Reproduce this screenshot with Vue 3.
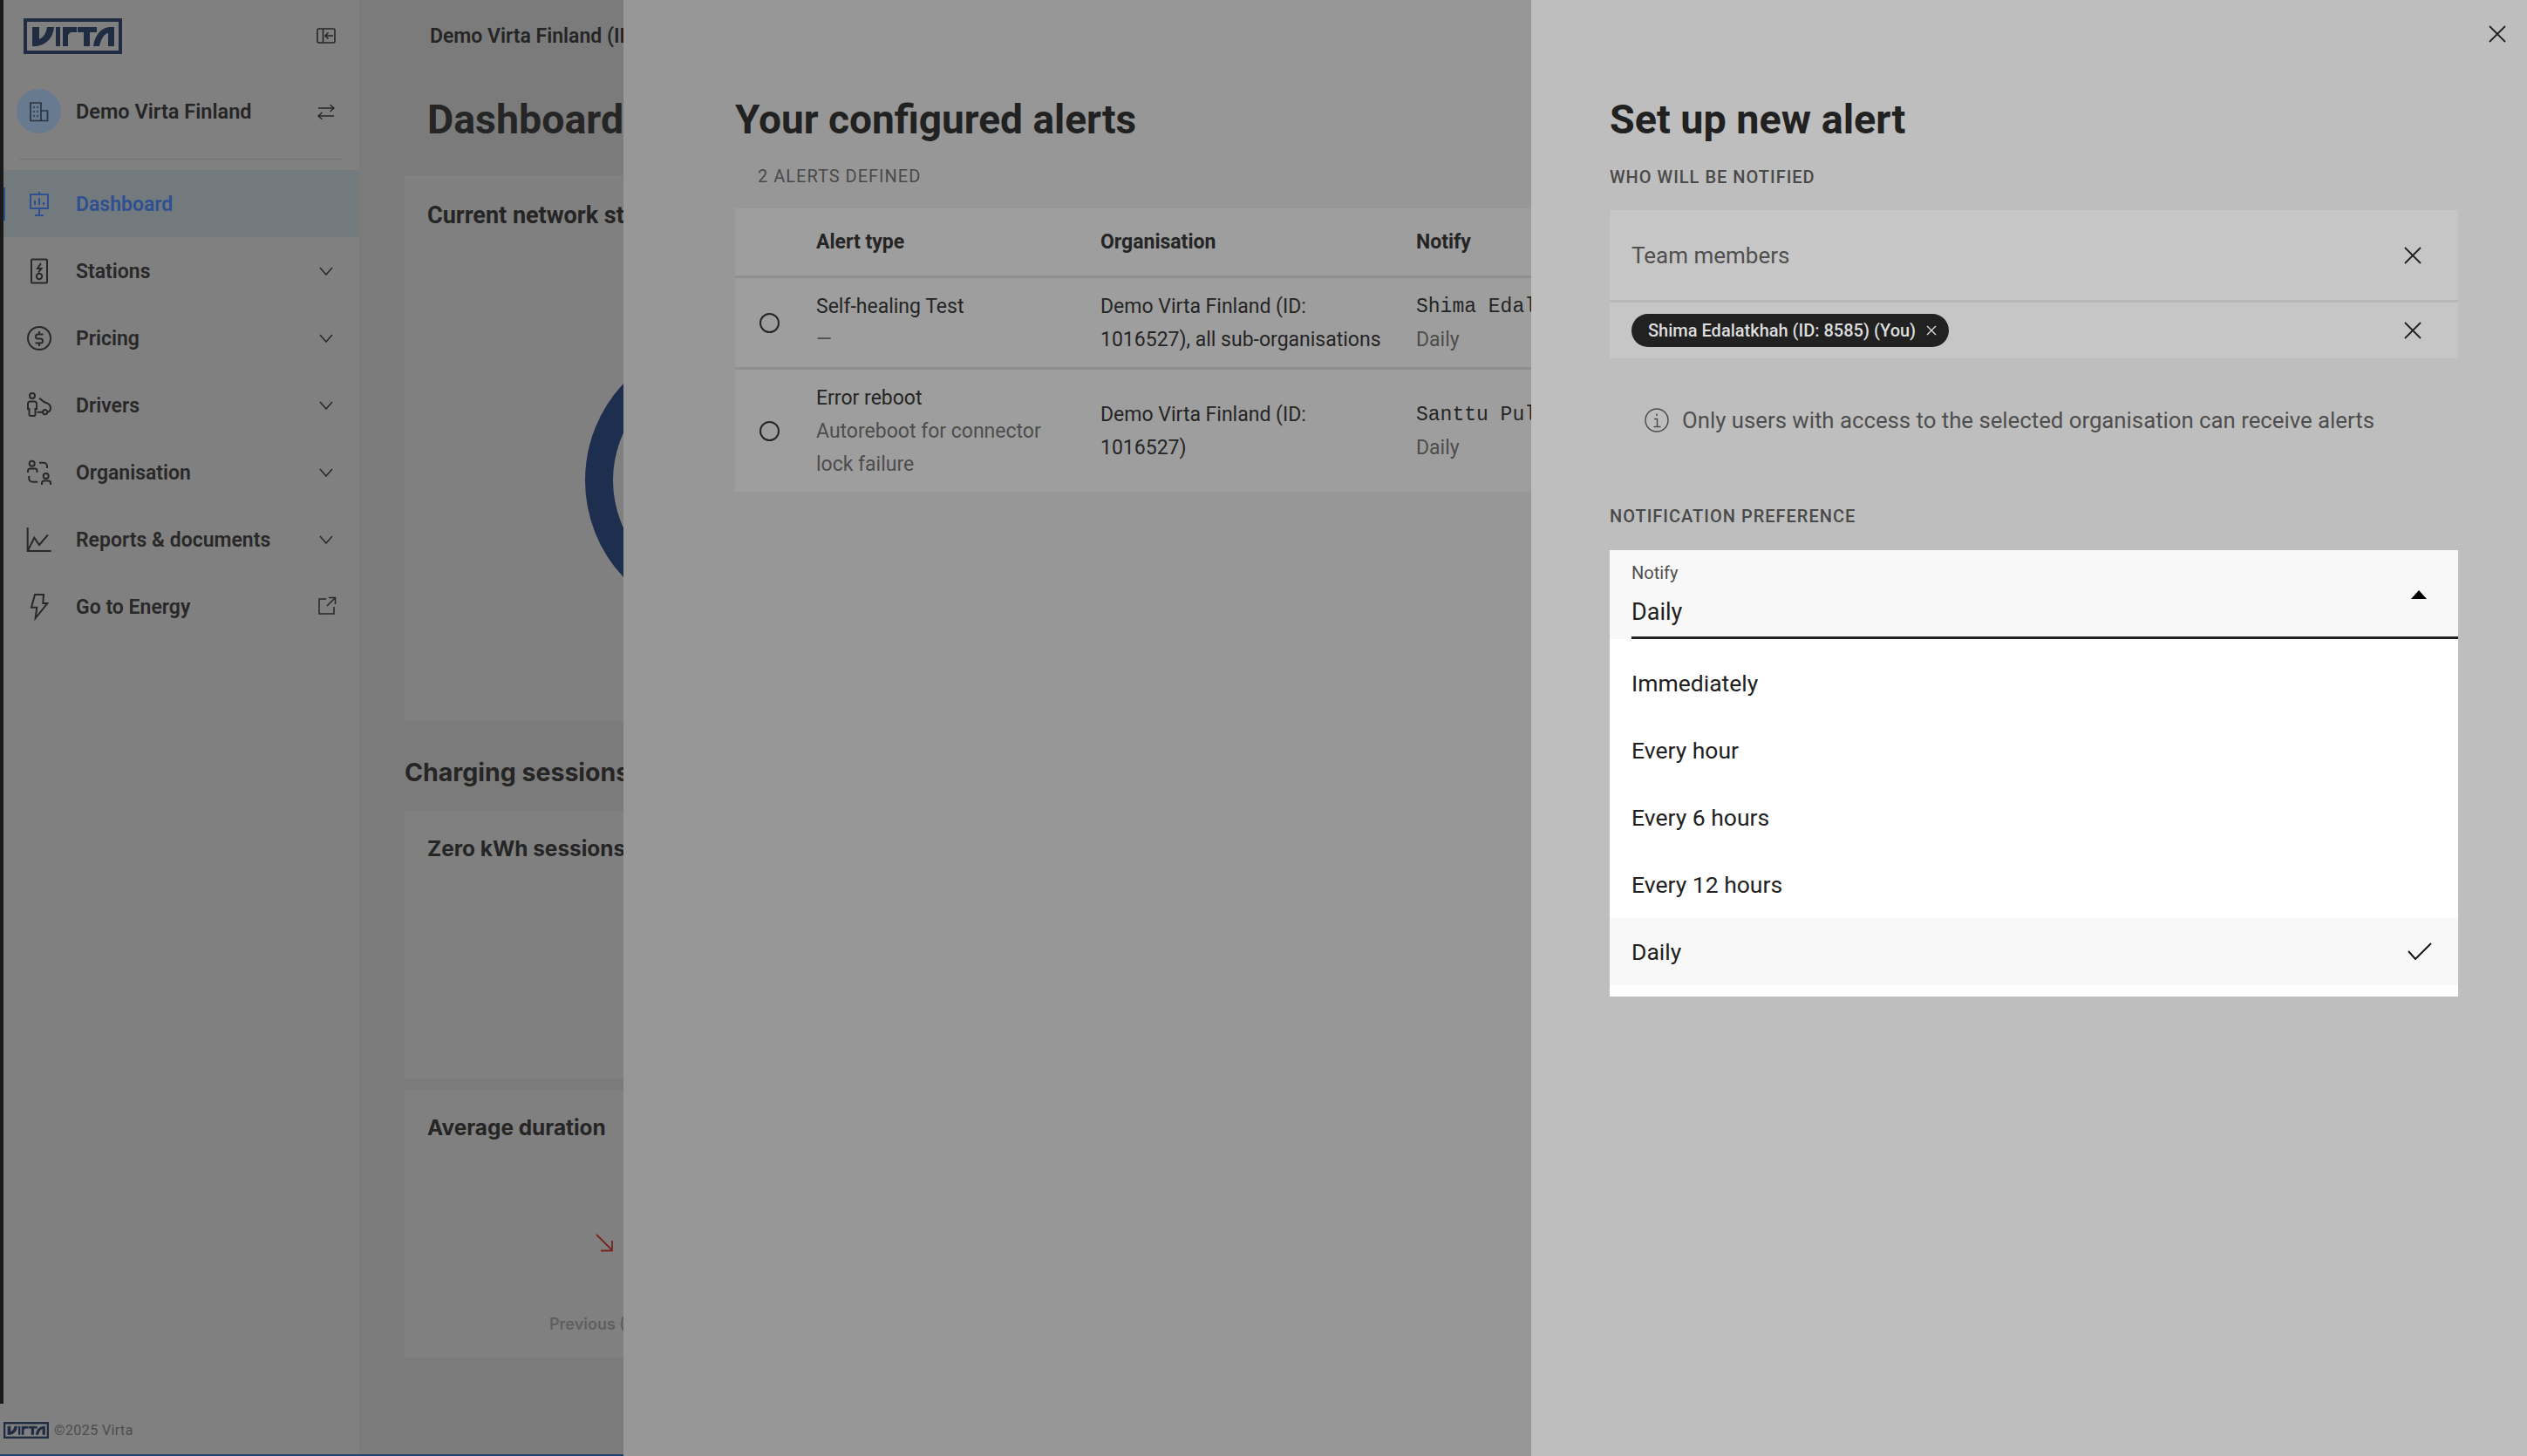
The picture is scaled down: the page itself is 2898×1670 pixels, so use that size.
<script setup>
// Alert set-up drawers on top of the dimmed dashboard
const navItems = [
  { label: 'Dashboard', active: true, paths: ['M6 5h20v16H6z', 'M16 2v3M16 21v8M11 29h10M11 17v-5M16 17V9M21 17v-3'] },
  { label: 'Stations', chevron: true, paths: ['M8 2.5h16a1 1 0 0 1 1 1v25a1 1 0 0 1-1 1H8a1 1 0 0 1-1-1v-25a1 1 0 0 1 1-1z', 'M18 7l-4 6h4.5L15 17.5', 'M19.2 22a3.2 3.2 0 1 1-6.4 0 3.2 3.2 0 0 1 6.4 0z'] },
  { label: 'Pricing', chevron: true, paths: ['M29 16a13 13 0 1 1-26 0 13 13 0 0 1 26 0z', 'M20.5 11.5h-6a2.5 2.5 0 0 0 0 5h3a2.5 2.5 0 0 1 0 5h-6', 'M16 8v3.5M16 21.5V25'] },
  { label: 'Drivers', chevron: true, paths: ['M11 5a3 3 0 1 1-6 0 3 3 0 0 1 6 0z', 'M5.5 11.5h5a2.5 2.5 0 0 1 2.5 2.5v6h-1.5v6.5a1.5 1.5 0 0 1-1.5 1.5H6a1.5 1.5 0 0 1-1.5-1.5V20H3v-6a2.500 2.500 0 0 1 2.500-2.500z', 'M16 8c3 1 4 4 8 5 3 1 5 3 5 6 0 3-2 4.500-3.500 4.700', 'M25.300 23.700a2.600 2.600 0 1 1-5.200 0 2.600 2.600 0 0 1 5.200 0zM13.500 23.700H20'] },
  { label: 'Organisation', chevron: true, paths: ['M10.700 5.700a3 3 0 1 1-6 0 3 3 0 0 1 6 0z', 'M3 16v-2a2.500 2.500 0 0 1 2.500-2.500h5.500a2.500 2.500 0 0 1 2.500 2.500v2', 'M16 4.700h5a4 4 0 0 1 4 4V11', 'M4.300 20v2.700a4 4 0 0 0 4 4h6', 'M26.700 20a3 3 0 1 1-6 0 3 3 0 0 1 6 0z', 'M19 30v-2a2.500 2.500 0 0 1 2.500-2.500h5a2.500 2.500 0 0 1 2.500 2.500v2'] },
  { label: 'Reports & documents', chevron: true, paths: ['M2.700 2v27h27', 'M2.700 29l7.600-15.300L16 22l10-11.700'] },
  { label: 'Go to Energy', external: true, paths: ['M11 2h10l-.7 10h5L11.700 29l1.600-12.300H7z'] },
]

const alerts = [
  { type: 'Self-healing Test', detail: ['—'], org: 'Demo Virta Finland (ID: 1016527), all sub-organisations', person: 'Shima Edalatkhah', freq: 'Daily' },
  { type: 'Error reboot', detail: ['Autoreboot for connector', 'lock failure'], org: 'Demo Virta Finland (ID: 1016527)', person: 'Santtu Pulkkinen', freq: 'Daily' },
]

const options = ['Immediately', 'Every hour', 'Every 6 hours', 'Every 12 hours', 'Daily']
const selected = 'Daily'

const logoShapes = 'M10 10h8v14c6-3 8-8 9-14h8c-1 12-8 20-20 22H10zM37 10h5v22h-5zM45 32V10h16v6h-5c-3 0-5 2-5 5v11zM62 10h22v6h-8v16h-7V16h-7zM80 32c2-14 10-22 20-22h4v22h-7V17c-5 1-8 7-10 15z'
</script>

<template>
  <div class="page">
    <!-- dimmed app behind the drawers -->
    <div class="backdrop">
      <div class="strip"></div>
      <aside class="sidebar">
        <div class="side-head">
          <svg class="logo" viewBox="0 0 113 41">
            <rect x="2" y="2" width="109" height="37" fill="none" stroke="#1f2c42" stroke-width="4" />
            <path :d="logoShapes" fill="#1f2c42" />
          </svg>
          <svg class="tool" width="22" height="18" viewBox="0 0 22 18" fill="none" stroke="#262626" stroke-width="1.600">
            <rect x="1" y="1" width="20" height="16" rx="1.500" />
            <path d="M7.500 1v16M19 9h-9M13.500 5.500L10 9l3.500 3.500" />
          </svg>
        </div>
        <div class="org-row">
          <div class="avatar">
            <svg width="24" height="24" viewBox="0 0 24 24" fill="none" stroke="#2a3442" stroke-width="1.700">
              <path d="M2 22.500V2h12v20.500zM14 11h7.500v11.500H14" />
              <path d="M6 6v2M10 6v2M6 11v2M10 11v2M6 16v2M10 16v2" stroke-width="1.500" />
            </svg>
          </div>
          <span class="org-name">Demo Virta Finland</span>
          <svg width="20" height="18" viewBox="0 0 20 18" fill="none" stroke="#262626" stroke-width="1.500">
            <path d="M1 5h18M14.500 1l4.500 4-4.500 4M19 14H1M5.500 10L1 14l4.500 4" />
          </svg>
        </div>
        <div class="side-rule"></div>
        <nav class="nav">
          <a v-for="item in navItems" :key="item.label" class="nav-item" :class="{ active: item.active }">
            <svg class="nav-icon" viewBox="0 0 32 32" width="32" height="32" fill="none" stroke="currentColor" stroke-width="2">
              <path v-for="d in item.paths" :key="d" :d="d" />
            </svg>
            <span class="nav-label">{{ item.label }}</span>
            <svg v-if="item.chevron" class="chevron" width="16" height="10" viewBox="0 0 16 10" fill="none" stroke="#262626" stroke-width="1.500">
              <path d="M1 1l7 8 7-8" />
            </svg>
            <svg v-if="item.external" class="external" width="22" height="22" viewBox="0 0 22 22" fill="none" stroke="#262626" stroke-width="1.500">
              <path d="M10 3H2v17h17v-8M13 1.500h7.500V9M20.500 1.500L11 11" />
            </svg>
          </a>
        </nav>
        <footer class="side-foot">
          <svg class="foot-logo" viewBox="0 0 113 41">
            <rect x="2.500" y="2.500" width="108" height="36" fill="none" stroke="#1f2c42" stroke-width="5" />
            <path :d="logoShapes" fill="#1f2c42" />
          </svg>
          <span>©2025 Virta</span>
        </footer>
      </aside>

      <main class="main">
        <div class="main-inner">
          <div class="crumb">Demo Virta Finland (ID: 1016527)</div>
          <h1 class="main-title">Dashboard</h1>
          <section class="card card-network">
            <h3 class="card-head">Current network status</h3>
            <div class="donut"></div>
          </section>
          <h2 class="section-head">Charging sessions</h2>
          <section class="card card-small">
            <h3 class="card-title">Zero kWh sessions</h3>
          </section>
          <section class="card card-small gap">
            <h3 class="card-title">Average duration</h3>
            <svg class="trend" width="20" height="21" viewBox="0 0 20 21" fill="none" stroke="#7a2620" stroke-width="1.800">
              <path d="M1 1l18 18M19 8v11.500H6" />
            </svg>
            <div class="previous">Previous (30 days)</div>
          </section>
        </div>
      </main>
    </div>

    <!-- list drawer -->
    <section class="drawer-list">
      <h2 class="drawer-title">Your configured alerts</h2>
      <div class="count">2 ALERTS DEFINED</div>
      <table class="alerts">
        <thead>
          <tr>
            <th class="col-radio"></th>
            <th class="col-type">Alert type</th>
            <th class="col-org">Organisation</th>
            <th class="col-notify">Notify</th>
          </tr>
        </thead>
        <tbody>
          <tr v-for="a in alerts" :key="a.type">
            <td><span class="radio"></span></td>
            <td>
              <div>{{ a.type }}</div>
              <div v-for="d in a.detail" :key="d" class="muted">{{ d }}</div>
            </td>
            <td>{{ a.org }}</td>
            <td>
              <div class="mono">{{ a.person }}</div>
              <div class="muted">{{ a.freq }}</div>
            </td>
          </tr>
        </tbody>
      </table>
    </section>

    <!-- form drawer -->
    <section class="drawer-form">
      <button class="close">
        <svg width="20" height="20" viewBox="0 0 20 20" fill="none" stroke="#212121" stroke-width="1.800"><path d="M1 1l18 18M19 1L1 19" /></svg>
      </button>
      <h2 class="drawer-title form-title">Set up new alert</h2>
      <div class="eyebrow who">WHO WILL BE NOTIFIED</div>
      <div class="field-team">
        <span>Team members</span>
        <svg width="20" height="20" viewBox="0 0 20 20" fill="none" stroke="#212121" stroke-width="1.800"><path d="M1 1l18 18M19 1L1 19" /></svg>
      </div>
      <div class="field-chips">
        <span class="chip">
          Shima Edalatkhah (ID: 8585) (You)
          <svg width="12" height="12" viewBox="0 0 12 12" fill="none" stroke="#dedede" stroke-width="1.300"><path d="M1 1l10 10M11 1L1 11" /></svg>
        </span>
        <svg width="20" height="20" viewBox="0 0 20 20" fill="none" stroke="#212121" stroke-width="1.800"><path d="M1 1l18 18M19 1L1 19" /></svg>
      </div>
      <div class="info">
        <svg width="28" height="28" viewBox="0 0 28 28" fill="none" stroke="#4e4e4e" stroke-width="1.500">
          <circle cx="14" cy="14" r="13" />
          <path d="M14 6.500v2.500M11 12.500h3.500v9M10.500 21.500h8" />
        </svg>
        <span>Only users with access to the selected organisation can receive alerts</span>
      </div>
      <div class="eyebrow pref">NOTIFICATION PREFERENCE</div>
      <div class="select">
        <div class="select-inner">
          <div class="select-text">
            <div class="select-label">Notify</div>
            <div class="select-value">{{ selected }}</div>
          </div>
          <span class="caret"></span>
        </div>
      </div>
      <ul class="menu">
        <li v-for="o in options" :key="o" :class="{ picked: o === selected }">
          <span>{{ o }}</span>
          <svg v-if="o === selected" width="28" height="20" viewBox="0 0 28 20" fill="none" stroke="#161616" stroke-width="2"><path d="M1 10l8 9L27 1" /></svg>
        </li>
      </ul>
    </section>
  </div>
</template>

<style>
html, body { margin: 0; background: #bebebe; }
</style>

<style scoped>
.page {
  display: flex;
  width: 2898px;
  height: 1670px;
  overflow: hidden;
  font-family: Roboto, "Noto Sans", Arial, sans-serif;
  color: #252525;
}
h1, h2, h3 { margin: 0; }

.backdrop {
  flex: none;
  display: flex;
  width: 715px;
  height: 1670px;
  box-sizing: border-box;
  border-bottom: 2px solid #1f4272;
  overflow: hidden;
  background: #808080;
}
.strip { flex: none; width: 4px; height: 1610px; background: #1a1a1a; }

.sidebar {
  flex: none;
  width: 408px;
  display: flex;
  flex-direction: column;
  background: #808080;
}
.side-head {
  height: 82px;
  display: flex;
  align-items: center;
  justify-content: space-between;
  padding: 0 27px 0 23px;
}
.logo { width: 113px; height: 41px; display: block; }
.org-row {
  height: 91px;
  display: flex;
  align-items: center;
  padding: 0 28px 0 15px;
  font-size: 23.500px;
  font-weight: 600;
}
.avatar {
  width: 51px;
  height: 51px;
  border-radius: 50%;
  background: #677a90;
  display: flex;
  align-items: center;
  justify-content: center;
  margin-right: 17px;
}
.org-name { flex: 1; }
.side-rule { height: 1px; background: #737373; margin: 9px 20px 0 18px; }
.nav { margin-top: 12px; display: flex; flex-direction: column; }
.nav-item {
  position: relative;
  height: 77px;
  display: flex;
  align-items: center;
  padding-left: 25px;
  font-size: 23px;
  font-weight: 600;
  color: #282828;
}
.nav-item.active { background: #737a7e; color: #2e5090; }
.nav-item.active::before {
  content: "";
  position: absolute;
  left: 0;
  top: 20px;
  width: 2px;
  height: 38px;
  background: #2e5090;
}
.nav-icon { flex: none; margin-right: 26px; }
.nav-label { flex: 1; padding-top: 2px; }
.chevron { margin-right: 30px; }
.external { margin-right: 26px; margin-top: -2px; }
.side-foot {
  margin-top: auto;
  height: 37px;
  display: flex;
  align-items: flex-start;
  gap: 6px;
  font-size: 16px;
  color: #4c4c4c;
  letter-spacing: 0.4px;
}
.foot-logo { width: 52px; height: 19px; display: block; }
.side-foot span { line-height: 19px; }

.main { flex: 1; min-width: 0; background: #7b7b7b; overflow: hidden; }
.main-inner { width: 1100px; padding-left: 52px; white-space: nowrap; }
.crumb { height: 82px; line-height: 84px; padding-left: 29px; font-size: 23px; font-weight: 600; }
.main-title { margin-top: 25px; height: 60px; line-height: 60px; padding-left: 26px; font-size: 46.500px; font-weight: 700; }
.card { background: #808080; padding: 26px; box-sizing: border-box; }
.card-network { margin-top: 34px; height: 626px; }
.card-head { font-size: 27px; font-weight: 700; line-height: 40px; height: 38px; }
.donut {
  width: 324px;
  height: 324px;
  box-sizing: border-box;
  margin: 124px 0 0 181px;
  border: 32px solid #1e2e4e;
  border-radius: 50%;
}
.section-head {
  margin-top: 38px;
  height: 40px;
  line-height: 42px;
  font-family: Inter, Roboto, sans-serif;
  font-size: 28.500px;
  font-weight: 700;
}
.card-small { margin-top: 25px; height: 307px; }
.card-small.gap { margin-top: 13px; }
.card-title { font-family: Inter, Roboto, sans-serif; font-size: 24.400px; font-weight: 700; line-height: 34px; height: 32px; }
.trend { display: block; margin: 107px 0 0 193px; }
.previous {
  margin: 70px 0 0 140px;
  line-height: 26px;
  font-family: Inter, Roboto, sans-serif;
  font-size: 18px;
  font-weight: 600;
  color: #5f5f5f;
}

.drawer-list {
  flex: none;
  width: 1041px;
  box-sizing: border-box;
  padding: 107px 0 0 128px;
  background: #979797;
  overflow: hidden;
}
.drawer-title { height: 60px; line-height: 60px; font-size: 46px; font-weight: 700; color: #212121; white-space: nowrap; }
.form-title { font-size: 46.700px; }
.count {
  margin-top: 23px;
  padding-left: 26px;
  line-height: 24px;
  font-size: 20px;
  letter-spacing: 1px;
  color: #4a4a4a;
}
.alerts {
  margin-top: 25px;
  width: 1181px;
  table-layout: fixed;
  border-collapse: collapse;
  background: #9e9e9e;
  font-size: 23px;
  line-height: 38px;
  color: #252525;
}
.alerts th { height: 77px; padding: 0; text-align: left; font-weight: 700; border-bottom: 3px solid #8f8f8f; }
.alerts td { padding: 14px 24px 12px 0; vertical-align: middle; }
.alerts tbody tr + tr td { border-top: 3px solid #8f8f8f; }
.col-radio { width: 93px; }
.col-type { width: 326px; }
.col-org { width: 362px; }
.col-notify { width: 400px; }
.radio {
  display: block;
  width: 23px;
  height: 23px;
  margin-left: 28px;
  margin-top: -2px;
  box-sizing: border-box;
  border: 2px solid #262626;
  border-radius: 50%;
}
.muted { color: #4d4d4d; }
.mono { font-family: "Liberation Mono", monospace; font-size: 23px; white-space: nowrap; }

.drawer-form {
  position: relative;
  flex: 1;
  box-sizing: border-box;
  padding: 107px 80px 0 90px;
  background: #bebebe;
}
.close {
  position: absolute;
  top: 29px;
  right: 25px;
  padding: 0;
  border: 0;
  background: none;
  line-height: 0;
}
.eyebrow { line-height: 24px; font-size: 20px; font-weight: 500; letter-spacing: 1px; color: #4a4a4a; }
.who { margin-top: 24px; }
.pref { margin-top: 80px; }
.field-team, .field-chips {
  display: flex;
  align-items: center;
  justify-content: space-between;
  padding: 0 42px 0 25px;
  background: #c6c6c6;
}
.field-team {
  margin-top: 26px;
  height: 106px;
  box-sizing: border-box;
  border-bottom: 3px solid #b8b8b8;
  font-size: 26px;
  color: #505050;
}
.field-chips { height: 64px; }
.chip {
  display: flex;
  align-items: center;
  gap: 12px;
  height: 38px;
  padding: 0 14px 0 19px;
  border-radius: 19px;
  background: #212121;
  color: #dedede;
  font-size: 20px;
  font-weight: 500;
}
.info {
  display: flex;
  align-items: center;
  gap: 15px;
  margin-top: 53px;
  padding-left: 40px;
  height: 36px;
  font-size: 25.750px;
  color: #4e4e4e;
}
.select { margin-top: 27px; height: 102px; background: #f8f8f8; padding-left: 25px; }
.select-inner {
  height: 102px;
  box-sizing: border-box;
  padding-right: 36px;
  border-bottom: 3px solid #212121;
  display: flex;
  align-items: center;
  justify-content: space-between;
}
.select-label { line-height: 24px; font-size: 20px; color: #4f4f4f; margin-top: 1px; }
.select-value { margin-top: 18px; line-height: 30px; font-size: 27px; color: #212121; }
.caret {
  width: 0;
  height: 0;
  margin-top: 3px;
  border-left: 9.500px solid transparent;
  border-right: 9.500px solid transparent;
  border-bottom: 10px solid #000;
}
.menu {
  list-style: none;
  margin: 0;
  padding: 12px 0 13px;
  background: #fff;
  width: 973px;
  font-size: 26.500px;
  color: #212121;
}
.menu li {
  height: 77px;
  padding: 0 30px 0 25px;
  display: flex;
  align-items: center;
  justify-content: space-between;
}
.menu li span { margin-top: -1px; }
.menu li svg { margin-top: -1px; }
.menu li.picked { background: #f8f8f8; }
</style>
